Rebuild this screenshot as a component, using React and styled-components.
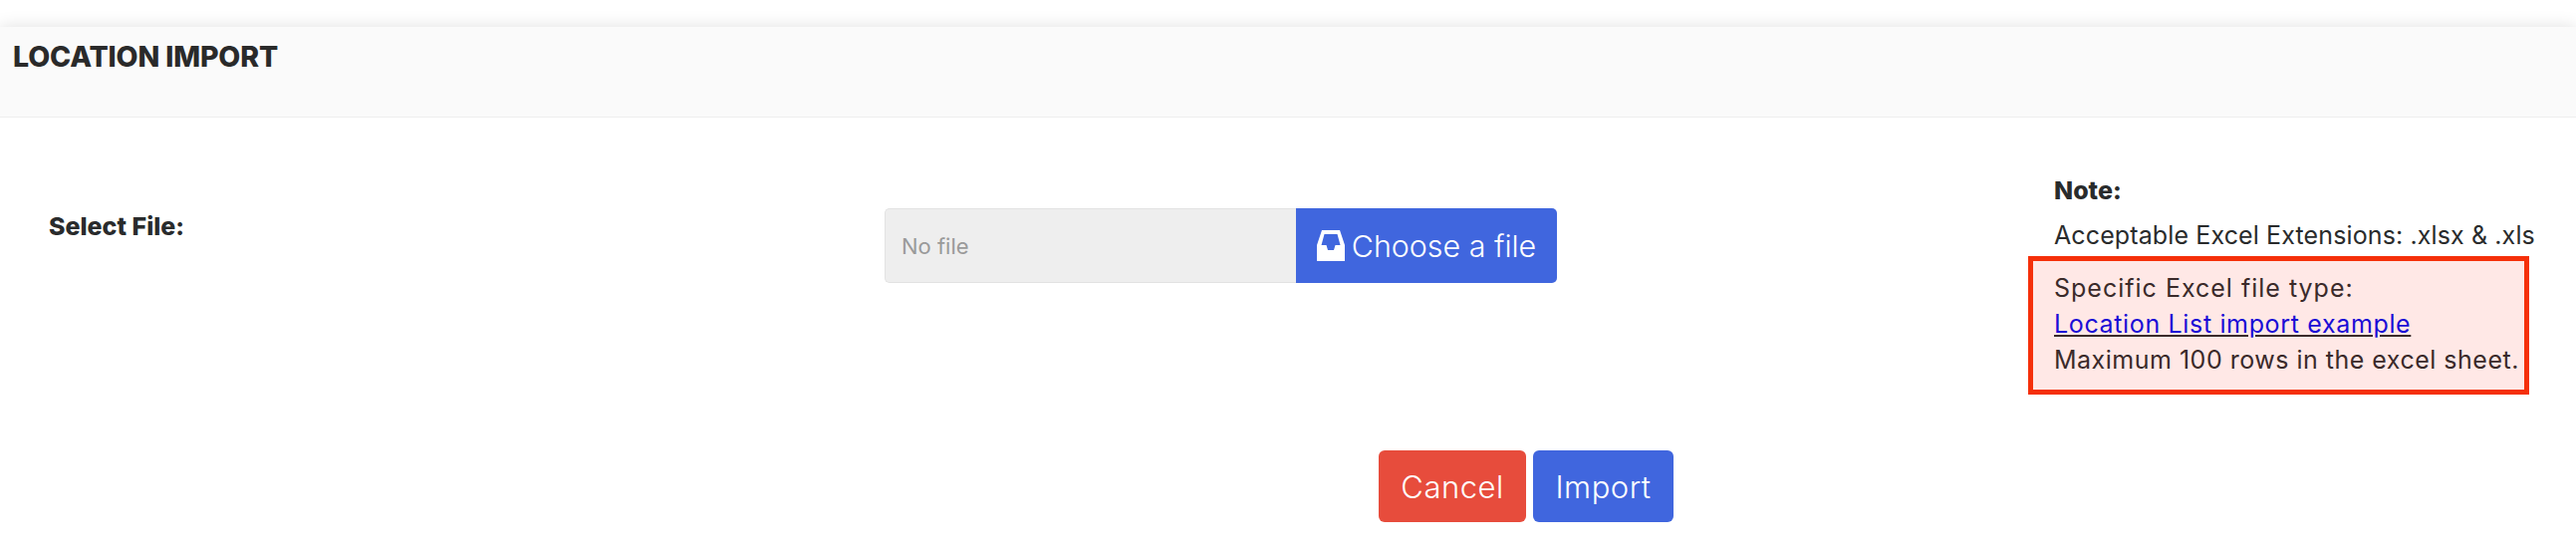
import styled, { createGlobalStyle } from "styled-components";

const GlobalStyle = createGlobalStyle`
  html, body {
    margin: 0;
    height: 558px;
    overflow: hidden;
    background: #fff;
    font-family: "Inter", "Open Sans", sans-serif;
    color: #292b2c;
  }
`;

function InboxIcon() {
  return (
    <svg width="28" height="31" viewBox="0 0 28 31" fill="#fff">
      <path
        fillRule="evenodd"
        d="M5 0H23L28 15V31H0V15ZM7.5 4 4.5 15H9.5L11 20H17L18.5 15H23.5L20.5 4Z"
      />
    </svg>
  );
}

export default function App() {
  return (
    <>
      <GlobalStyle />
      <Page>
        <Card>
          <CardHeader>
            <Title>LOCATION IMPORT</Title>
          </CardHeader>
          <FormRow>
            <FieldLabel>Select File:</FieldLabel>
            <FilePicker>
              <FileName>No file</FileName>
              <ChooseButton>
                <InboxIcon />
                Choose a file
              </ChooseButton>
            </FilePicker>
            <NoteColumn>
              <NoteTitle>Note:</NoteTitle>
              <NoteLine>Acceptable Excel Extensions: .xlsx &amp; .xls</NoteLine>
              <NoteBox>
                <BoxLine $track={1}>Specific Excel file type:</BoxLine>
                <BoxLine $track={0.65}>
                  <ExampleLink href="#">Location List import example</ExampleLink>
                </BoxLine>
                <BoxLine $track={0.5}>Maximum 100 rows in the excel sheet.</BoxLine>
              </NoteBox>
            </NoteColumn>
          </FormRow>
          <Actions>
            <ActionButton $color="#e74c3c" $width={148}>Cancel</ActionButton>
            <ActionButton $color="#4066de" $width={141}>Import</ActionButton>
          </Actions>
        </Card>
      </Page>
    </>
  );
}

const Page = styled.div`
  padding-top: 27px;
`;

const Card = styled.div`
  height: 531px;
  background: #fff;
  box-shadow: 0 0 16px rgba(0, 0, 0, 0.13);
`;

const CardHeader = styled.div`
  height: 91px;
  padding: 10px 13px 0;
  box-sizing: border-box;
  background: #fafafa;
  border-bottom: 1px solid #eeeeee;
`;

const Title = styled.h1`
  margin: 0;
  font-size: 28.5px;
  line-height: 40px;
  font-weight: 800;
  letter-spacing: -0.15px;
  color: #2a2a2a;
`;

const FormRow = styled.div`
  display: grid;
  grid-template-columns: 839px 675px 1fr;
  padding: 50px 47px 0 49px;
`;

const FieldLabel = styled.div`
  padding-top: 41px;
  font-size: 25px;
  line-height: 36px;
  font-weight: 800;
`;

const FilePicker = styled.div`
  display: flex;
  height: 75px;
  margin-top: 41px;
`;

const FileName = styled.div`
  flex: 1;
  display: flex;
  align-items: center;
  padding-left: 16px;
  background: #eeeeee;
  border: 1px solid #e2e2e2;
  border-right: 0;
  border-radius: 5px 0 0 5px;
  font-size: 22px;
  color: #9a9a9a;
`;

const ChooseButton = styled.div`
  width: 262px;
  display: flex;
  align-items: center;
  justify-content: center;
  gap: 7px;
  background: #4066de;
  border-radius: 0 5px 5px 0;
  color: #fff;
  font-size: 30.4px;
  font-weight: 300;
`;

const NoteColumn = styled.div`
  justify-self: end;
  width: 503px;
`;

const NoteTitle = styled.div`
  padding: 5px 0 0 26px;
  font-size: 25px;
  line-height: 36px;
  font-weight: 800;
`;

const NoteLine = styled.div`
  padding: 9px 0 0 26px;
  font-size: 25px;
  line-height: 36px;
  letter-spacing: 0.12px;
  white-space: nowrap;
`;

const NoteBox = styled.div`
  margin-top: 3px;
  padding: 9px 0 0 21px;
  height: 139px;
  box-sizing: border-box;
  background: #ffe8e6;
  border: 5px solid #f5300a;
`;

const BoxLine = styled.div`
  font-size: 25px;
  line-height: 36px;
  letter-spacing: ${(p) => p.$track}px;
  white-space: nowrap;
  color: #3a2a2a;
`;

const ExampleLink = styled.a`
  color: #1a0dd6;
  text-decoration-color: #3a2a2a;
`;

const Actions = styled.div`
  display: flex;
  gap: 7px;
  padding: 56px 0 0 1384px;
`;

const ActionButton = styled.button`
  width: ${(p) => p.$width}px;
  height: 72px;
  padding: 0;
  border: 0;
  border-radius: 6px;
  background: ${(p) => p.$color};
  color: #fff;
  font-family: inherit;
  font-size: 31px;
  letter-spacing: 0.5px;
  font-weight: 300;
`;
